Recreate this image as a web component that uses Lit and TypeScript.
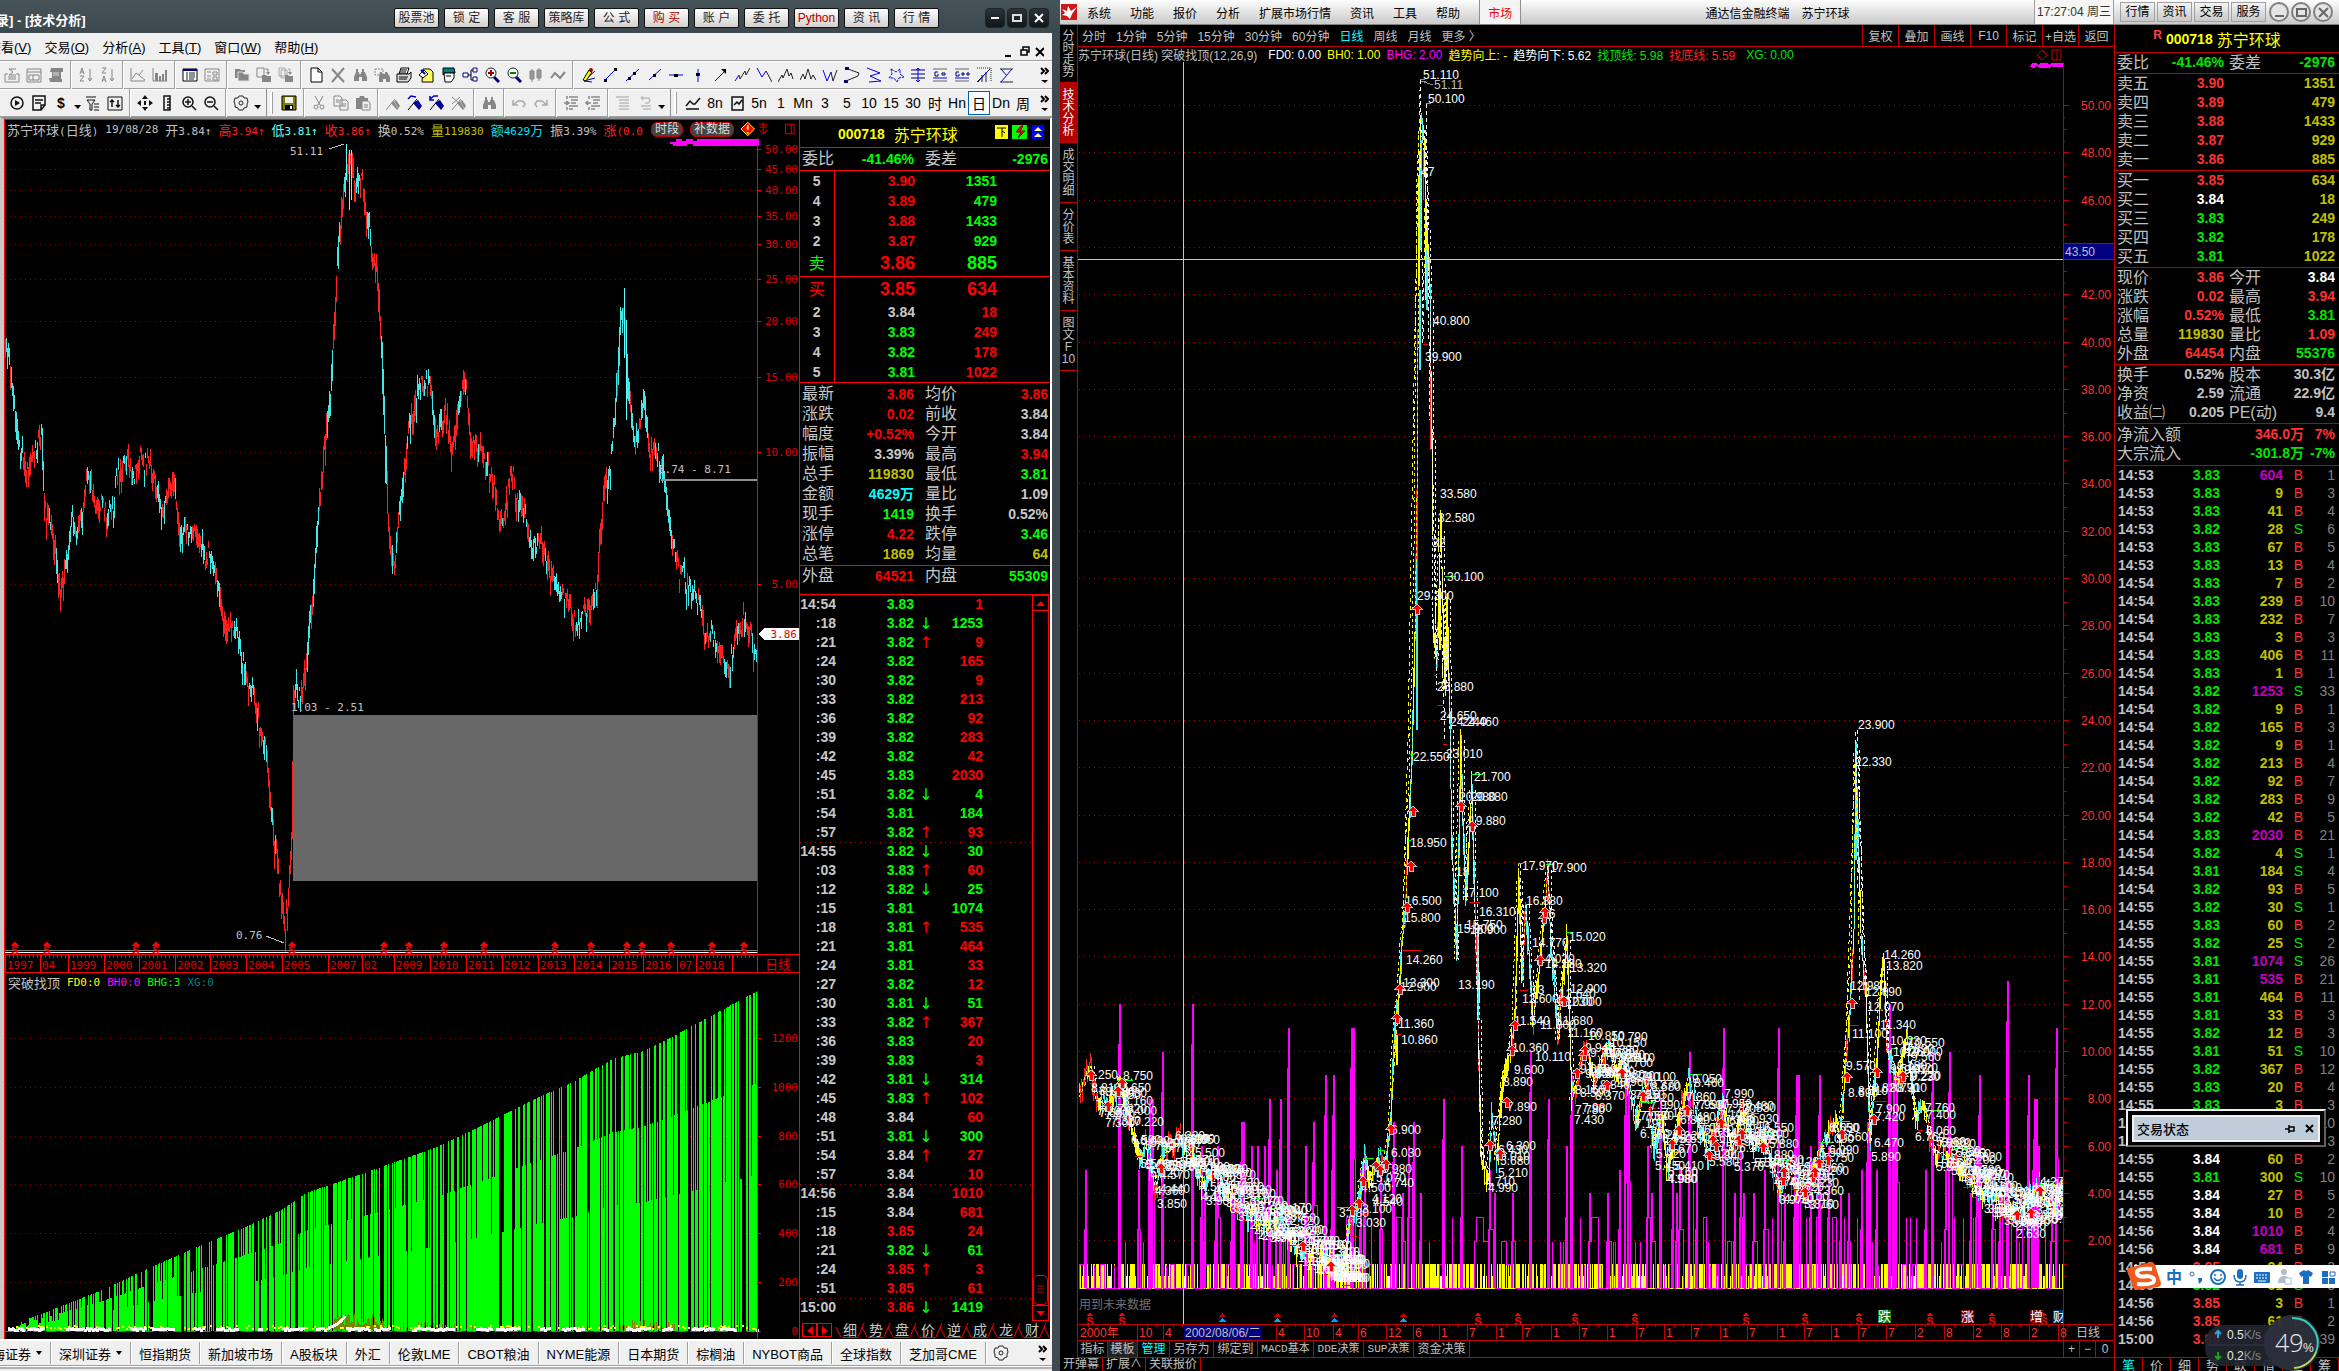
import { LitElement, html, css, svg, nothing } from "lit";
import { customElement } from "lit/decorators.js";
import { classMap } from "lit/directives/class-map.js";

type Pt = [number, number];

/* ---------- helpers ---------- */

const seeded = (seed: number) => () => {
  seed = (seed + 0x6d2b79f5) | 0;
  let t = Math.imul(seed ^ (seed >>> 15), 1 | seed);
  t = (t + Math.imul(t ^ (t >>> 7), 61 | t)) ^ t;
  return ((t ^ (t >>> 14)) >>> 0) / 4294967296;
};

const yAt = (pts: Pt[], x: number) => {
  for (let i = 1; i < pts.length; i++) {
    if (x <= pts[i][0]) {
      const [x0, y0] = pts[i - 1];
      const [x1, y1] = pts[i];
      return y0 + ((y1 - y0) * (x - x0)) / (x1 - x0 || 1);
    }
  }
  return pts[pts.length - 1][1];
};

const pairs = (s: string): Pt[] =>
  s.trim().split(/\s+/).map((p) => p.split(",").map(Number) as Pt);

/* Han runs and Latin runs get their own size */
const mix = (text: string) =>
  text
    .split(/([\u2e80-\uffef]+)/)
    .filter((t) => t)
    .map((t) => (/[\u2e80-\uffef]/.test(t) ? html`<span class="han">${t}</span>` : t));

const tone = (price: string) => {
  const v = parseFloat(price);
  return v > 3.84 ? "r" : v < 3.84 ? "g" : "w";
};

/* ---------- shared styles ---------- */

const base = css`
  * { box-sizing: border-box; }
  button { font: inherit; color: inherit; background: none; border: 0; padding: 0; margin: 0; white-space: nowrap; }
  table { border-collapse: collapse; border-spacing: 0; table-layout: fixed; width: 100%; }
  td, th { padding: 0; text-align: left; white-space: nowrap; overflow: hidden; }
  th { font-weight: 400; }
  svg { display: block; }
  .r { color: #ff0000; }
  .g { color: #00ff00; }
  .w { color: #c8c8c8; }
  .y { color: #c0c000; }
  .c { color: #00ffff; }
`;

/* ---------- toolbar icons, 16 x 16 ---------- */

const G = "#868686";
const binoc = (c: string) => svg`<path fill=${c} d="M4 2h2v3h1v2h2V5h1V2h2v3h1l2 5v4h-5v-4H7v4H2v-4l2-5z"/>`;
const glass = (c: string) => svg`<circle cx="7" cy="6" r="5" fill="#fff" stroke="#222"/><path d="M10 10l5 5" stroke="#000080" stroke-width="3"/><path d=${c === "red" ? "M4 6h6M7 3v6" : "M4 6h6"} stroke=${c === "red" ? "#a00000" : "#008000"} stroke-width="2"/>`;
const pin = (c: string, h: string) => svg`<path d="M1 15L10 4" stroke=${h}/><path fill=${c} d="M6 8l5-3 4 6-3 4z"/><path d="M9 6l4 7" stroke=${h === G ? "#bbb" : "#00f"}/>`;
const cut = (d: string) => svg`<path d=${d} fill="none" stroke="#222"/>`;
const seg = (d: string, k: string) => svg`<path d=${d} fill="none" stroke="#0000ff"/><path d=${k} fill="#000"/>`;

const ICONS: Record<string, unknown> = {
  sum: svg`<path d="M1 7h3M12 7h3M1 7v8h14V7M4 10h8M4 12h8M5 2h7M5 2l4 3-4 3h7" fill="none" stroke=${G}/>`,
  form: svg`<path d="M1 2h14v13H1zM1 5h14M3 8h10v5H3zM7 8v5" fill="none" stroke=${G}/>`,
  scroll: svg`<path fill=${G} d="M3 1h12v4h-2v7h1v3H2l-1-4h3V5H2z"/><path d="M5 6h6M5 8h6" stroke="#ddd"/>`,
  az: svg`<path d="M2 7l2-6 2 6M2 5h4M2 9h4l-4 5h4M12 2v12M10 11l2 3 2-3" fill="none" stroke=${G}/>`,
  za: svg`<path d="M2 1h4L2 6h4M2 15l2-6 2 6M2 13h4M12 2v12M10 11l2 3 2-3" fill="none" stroke=${G}/>`,
  line: svg`<path d="M1 1v13h14M2 12l4-6 4 3 5 4M9 8l4-5" fill="none" stroke=${G}/>`,
  bars: svg`<path d="M1 1v13h14" fill="none" stroke=${G}/><path fill=${G} d="M3 6h3v8H3zM7 9h2v5H7zM10 7h2v7h-2zM13 3h2v11h-2z"/>`,
  list: svg`<path fill="#fff" stroke="#000" d="M1 2h14v12H1z"/><path fill="#000090" d="M1 2h14v2H1z"/><path d="M4 6h2M7 6h6M4 8h2M7 8h6M4 10h2M7 10h6M4 12h2M7 12h5" stroke="#222"/>`,
  panes: svg`<path d="M1 2h14v12H1zM3 5h4M9 5h4v3H9zM3 9h4M3 12h4M9 10h4v3H9z" fill="none" stroke=${G}/>`,
  folders: svg`<path fill=${G} d="M1 2h5l1 1h4v2H4v6H1z"/><path fill=${G} stroke="#ddd" d="M4 5h5l1 2h5v7H4z"/>`,
  fup: svg`<path d="M1 1h7v9H1zM9 2h3v4" fill="none" stroke=${G}/><path fill=${G} d="M6 8h4l1 1h4v6H6zM10 5h4l-2 3z"/>`,
  fdn: svg`<path d="M1 1h6v8H1zM3 3h6v8H3zM10 2h2v4" fill="none" stroke="#aaa"/><path fill=${G} d="M7 8h3l1 1h4v6H7zM10 5h4l-2 3z"/>`,
  page: svg`<path d="M3 1h7l4 4v10H3zM10 1v4h4" fill="#fff" stroke="#000"/>`,
  cross: svg`<path d="M2 2l12 13M14 1L2 15" stroke=${G} stroke-width="2"/>`,
  binoc: binoc(G),
  binoc2: svg`<path d="M1 2h8v6H1z" fill="none" stroke=${G} stroke-dasharray="2 1"/><path fill=${G} d="M6 5h2v2h3V5h2l3 5v5h-4v-3H9v3H5v-5z"/>`,
  print: svg`<path fill="#fff" stroke="#000" d="M5 1h8l-2 6H3z"/><path fill="#ddd" stroke="#000" d="M1 7h12l2-2v6l-3 4H1z"/><path d="M5 3h6M4 5h6M3 10h9M3 12h8" stroke="#000"/>`,
  note: svg`<path fill="#ffff66" stroke="#000" d="M5 2h7l3 3v10H4z"/><path d="M1 8l5-5 4 4-5 4z" fill="#fff" stroke="#000"/><path d="M3 3l4 4" stroke="#0000c0" stroke-width="2"/>`,
  book: svg`<path fill="#008080" stroke="#000" d="M3 1h11l1 5H5L3 8z"/><path fill="#fff" stroke="#000" d="M4 6h10v5l-3 4H5z"/><path d="M6 9h5" stroke="#000"/>`,
  tree: svg`<path d="M6 8h3M9 3v10M9 3h2M9 13h2" stroke="#000"/><path fill="#fff" stroke="#000090" d="M1 6h5v4H1zM11 1h4v4h-4zM11 10h4v4h-4z"/>`,
  zin: glass("red"),
  zout: glass("green"),
  candle: svg`<path d="M4 2v13M11 1v13" stroke=${G}/><path fill="#999" stroke=${G} d="M2 4h4v8H2zM9 3h4v8H9z"/>`,
  wave: svg`<path d="M1 11l4-5 3 3 2 2 5-6" fill="none" stroke=${G} stroke-width="2"/>`,
  pencil: svg`<path d="M4 14L15 4M4 14l11-3M4 14l8 1" stroke="#0000c0"/><path d="M3 13L9 3l3 2-6 9z" fill="#ffff00" stroke="#000"/><circle cx="11" cy="3" r="2" fill="#a00000"/>`,
  s1: seg("M3 13L13 3", "M2 12h3v3H2zM12 1h3v3h-3z"),
  s2: seg("M2 14L15 2", "M4 10h3v3H4zM9 5h3v3H9z"),
  s3: seg("M3 13L15 2", "M7 7h3v3H7z"),
  s4: seg("M1 8h14", "M6 7h4v3H6z"),
  s5: seg("M8 2v13", "M6 6h4v3H6z"),
  s6: seg("M3 14L13 4", "M9 2h5v5l-2-2z"),
  z1: svg`<path d="M1 14l4-6" stroke="#00f" fill="none"/><path d="M5 8l1 4 5-8 1 4 4-7" fill="none" stroke="#222"/>`,
  z2: svg`<path d="M1 1l5 9 4-6" stroke="#00f" fill="none"/><path d="M10 4l6 11" fill="none" stroke="#222"/>`,
  z3: cut("M0 15l4-7 1 3 4-9 2 7 2-3 2 6"),
  z4: cut("M0 13l3-6 2 5 3-10 3 10 2-4 3 5"),
  z5: svg`<path d="M1 3l4 11 4-9" stroke="#00f" fill="none"/><path d="M9 5l2 9 4-11" fill="none" stroke="#222"/>`,
  z6: svg`<path fill="#000080" d="M1 0h4v3H1zM0 13h4v3H0z"/><path d="M4 2l11 4-1 3-12 5" fill="none" stroke="#222"/>`,
  z7: svg`<path d="M1 1l13 5-10 3 11 5-12 1" fill="none" stroke="#00f"/>`,
  z8: svg`<path d="M3 2l5 3 4-3 0 5 4 3-5 1-2 4-3-4-5 0 3-4z" fill="none" stroke="#00f" stroke-dasharray="3 1"/>`,
  z9: svg`<path d="M1 3h14M1 7h14M1 11h14" stroke="#000080"/><path d="M8 1v14M6 3l2-2 2 2M6 13l2 2 2-2" fill="none" stroke="#00f"/>`,
  g1: svg`<path d="M1 2h14M1 14h14" stroke="#666"/><path d="M1 11h14" stroke="#00f"/><path d="M6 5H3v4h3V7M10 6h3v2h-3z" fill="none" stroke="#000080"/>`,
  g2: svg`<path d="M1 2h14M1 14h14" stroke="#666"/><path d="M1 11h14" stroke="#00f"/><path d="M5 5H2v4h3V7M8 6h2v2H8zM13 6h2v2h-2z" fill="none" stroke="#000080"/>`,
  m1: svg`<path d="M1 1h14v14" fill="none" stroke="#222" stroke-dasharray="1 1"/><path d="M1 15L14 2M6 15V8M10 15V5" stroke="#222"/><path d="M2 15l9-10" stroke="#00f"/>`,
  m2: svg`<path d="M2 2h13M2 15h13" stroke="#222"/><path d="M3 2l6 7M14 2L3 15" stroke="#00f"/>`,
  play: svg`<circle cx="8" cy="8" r="6" fill="none" stroke="#111" stroke-width="1.5"/><path d="M6 5l5 3-5 3z" fill="#111"/>`,
  memo: svg`<path d="M2 1h12v9l-4 5H2zM14 10h-4v5M4 5h8M4 8h6" fill="none" stroke="#111" stroke-width="1.5"/>`,
  filter: svg`<path d="M1 2h10M2 5l3 4v6h2V9l3-4zM9 9h5M9 12h5M9 15h5" fill="none" stroke="#111"/>`,
  updn: svg`<path d="M1 2h14v13H1z" fill="none" stroke="#111"/><path d="M5 12V5M3 7l2-2 2 2M11 5v7M9 10l2 2 2-2" fill="none" stroke="#111" stroke-width="1.5"/>`,
  move: svg`<path fill="#111" d="M8 0l3 4H5zM8 16l3-4H5zM0 8l4-3v6zM16 8l-4-3v6zM7 6h2v4H7z"/>`,
  ruler: svg`<path d="M5 1h6v14H5zM8 4h3M8 7h3M8 10h3M8 13h3" fill="none" stroke="#111" stroke-width="1.5"/>`,
  zi: svg`<circle cx="7" cy="7" r="5" fill="none" stroke="#111" stroke-width="1.5"/><path d="M4 7h6M7 4v6M11 11l4 4" stroke="#111" stroke-width="1.5"/>`,
  zo: svg`<circle cx="7" cy="7" r="5" fill="none" stroke="#111" stroke-width="1.5"/><path d="M4 7h6M11 11l4 4" stroke="#111" stroke-width="1.5"/>`,
  gear: svg`<path d="M6 1h4l1 2 3 0 1 4-1 2 0 3-3 1-1 2H6l-1-2-3-1 0-3-1-2 1-4 3 0z" fill="none" stroke="#222"/><circle cx="8" cy="8" r="2" fill="none" stroke="#222"/>`,
  save: svg`<path fill="#808000" stroke="#000" d="M1 1h14v14H1z"/><path fill="#eee" d="M4 2h8v6H4z"/><path fill="#000" d="M4 10h8v5H4z"/><path fill="#fff" d="M9 11h2v3H9z"/>`,
  cutg: svg`<path d="M4 1l5 9M12 1L7 10" stroke=${G}/><circle cx="5" cy="12" r="2" fill="none" stroke=${G}/><circle cx="11" cy="12" r="2" fill="none" stroke=${G}/>`,
  copy: svg`<path d="M1 1h6l2 2v8H1zM7 5h6l2 2v8H7zM3 5h3M3 7h3M9 9h4M9 11h4" fill="none" stroke=${G}/>`,
  paste: svg`<path fill=${G} d="M1 3h3l1-2h4l1 2h3v11H1z"/><path d="M7 6h6l2 2v7H7z" fill="#eee" stroke=${G}/><path d="M9 10h4M9 12h4" stroke=${G}/>`,
  pin0: pin(G, G),
  pin1: svg`${pin("#000080", "#000")}<path d="M1 4l3-3 5 1" fill="none" stroke="#0000c0" stroke-width="1.5"/>`,
  pin2: svg`${pin("#000080", "#000")}<path d="M1 1v4h4M1 4l4-3h4" fill="none" stroke="#0000c0" stroke-width="1.5"/>`,
  pin3: svg`${pin(G, G)}<path d="M1 2l8 7M9 2L1 9" stroke=${G}/>`,
  undo: svg`<path d="M2 5v5h5M2 10l5-4 5 0 2 3-2 3" fill="none" stroke="#aaa" stroke-width="1.5"/>`,
  redo: svg`<path d="M14 5v5H9M14 10L9 6H4L2 9l2 3" fill="none" stroke="#aaa" stroke-width="1.5"/>`,
  ind: svg`<path d="M6 2h9M8 5h7M8 8h5M6 11h9M6 14h4M4 1v3M4 12v3M1 8h5M3 6l3 2-3 2" fill="none" stroke=${G} stroke-width="1.5"/>`,
  out: svg`<path d="M6 2h9M8 5h7M8 8h5M6 11h9M6 14h4M4 1v3M4 12v3M1 8h5M3 6L1 8l2 2" fill="none" stroke=${G} stroke-width="1.5"/>`,
  rows: svg`<path d="M1 2h13M4 5h10M4 8h10M4 11h10M4 14h10" stroke="#bbb" stroke-width="1.5"/>`,
  rows2: svg`<path d="M4 3h8l1 3-2 2H8M4 11h10M6 14h8M4 3l2-2M4 3l2 2" fill="none" stroke="#bbb" stroke-width="1.5"/>`,
  trend: svg`<path d="M1 11l4-5 3 3 2 0 5-6M1 14h13" fill="none" stroke="#111" stroke-width="1.5"/>`,
  box: svg`<path d="M3 2h11v13H3zM5 10l3-3 2 2 3-4" fill="none" stroke="#111" stroke-width="1.5"/>`,
};

const ic = (name: string, size = 16) =>
  html`<svg viewBox="0 0 16 16" width=${size} height=${size}>${ICONS[name]}</svg>`;

/* ---------- left chart ---------- */

const LEFT_PRICE: Pt[] = pairs(`3,220 5,236 8,252 12,290 18,308 25,315 28,302 30,345 35,352 40,395 43,385 48,355 52,360
  60,325 66,345 72,350 78,330 84,308 90,322 96,318 104,324 110,340 116,328 122,355 130,368 138,375 145,388 152,420
  158,425 165,458 172,480 178,500 184,560 188,590 191,616 194,600 196,570 197,468 202,470 206,440 210,400 214,350
  218,310 222,260 226,190 230,135 234,108 238,125 243,124 248,165 253,185 256,225 260,350 264,385 268,350 274,300
  280,248 288,254 292,285 298,274 303,310 306,290 311,260 316,290 322,300 330,325 335,350 342,320 350,345 356,370
  363,362 370,390 378,400 386,415 394,415 400,400 404,340 409,310 412,290 416,215 418,205 421,270 426,300 432,270
  435,310 440,304 444,316 448,350 454,378 460,393 466,400 472,426 478,430 484,446 488,458 492,440 498,414 504,434
  508,426`).map(([x, y]) => [Math.round(x * 1.4917), Math.round(y * 1.4917)] as Pt);

const candles = (pts: Pt[], x0: number, x1: number, seed: number, colors: string[], amp: number, maxSlope: number, wander: number) => {
  const rnd = seeded(seed);
  const d = colors.map(() => "");
  let k = 0;
  let off = 0;
  for (let x = x0; x < x1; x++) {
    off = off * 0.8 + (rnd() - 0.5) * wander;
    const y = yAt(pts, x) + off;
    const next = yAt(pts, x + 1) + off;
    const slope = Math.min(Math.abs(next - y), maxSlope);
    const top = Math.round(Math.min(y, next) - rnd() * amp);
    const h = Math.round(slope + 3 + rnd() * amp);
    if (rnd() < 0.45) k = Math.floor(rnd() * colors.length);
    d[k] += `M${x} ${top}v${h}`;
  }
  return d.map((p, i) => svg`<path d=${p} stroke=${colors[i]} transform="translate(.5 0)"/>`);
};

const GRID_L: [string, number][] = [
  ["50.00", 149], ["45.00", 169], ["40.00", 190], ["35.00", 216], ["30.00", 244],
  ["25.00", 279], ["20.00", 321], ["15.00", 377], ["10.00", 452], ["5.00", 584],
];
const YEARS: [string, number][] = [
  ["1997", 6], ["04", 41], ["1999", 69], ["2000", 105], ["2001", 140], ["2002", 176], ["2003", 211], ["2004", 247],
  ["2005", 283], ["2007", 329], ["02", 363], ["2009", 395], ["2010", 431], ["2011", 467], ["2012", 503], ["2013", 539],
  ["2014", 575], ["2015", 610], ["2016", 644], ["07", 678], ["2018", 697], ["", 733],
];
const WEDGE: Pt[] = pairs(`6,1330 25,1319 51,1309 102,1289 153,1265 204,1243 245,1226 281,1209 306,1192 332,1183
  378,1167 434,1147 485,1123 536,1097 571,1082 612,1058 643,1050 668,1038 714,1013 757,990`);

const wedgeBars = () => {
  const rnd = seeded(11);
  let d = "";
  let density = 0.5;
  for (let x = 16; x < 757; x++) {
    if (x % 9 === 0) density = 0.3 + rnd() * 0.55;
    const full = 1330 - yAt(WEDGE, x);
    const r = rnd();
    let f = 0;
    if (r < 0.45) f = 1;
    else if (r < 0.45 + density * 0.4) f = 0.73;
    else if (r < 0.5 + density * 0.5) f = 0.46;
    else if (r < 0.62) f = 0.2;
    if (x > 379 && x < 384) f = 0;
    if (f) d += `M${x} 1330v-${Math.round(full * f)}`;
  }
  return d;
};

const dotsRow = () => {
  const rnd = seeded(5);
  let white = "";
  let olive = "";
  let yellow = "";
  for (let x = 8; x < 757; x += 2) {
    if (Math.sin(x / 11) + Math.sin(x / 5) > -0.1) white += `M${x} ${1327 + Math.round(rnd() * 2)}h3`;
    if (rnd() > 0.6) yellow += `M${x} ${1328 - Math.round(rnd() * 3)}h2`;
  }
  for (let x = 334; x < 384; x++) olive += `M${x} 1329v-${Math.round(4 + rnd() * 14)}`;
  for (let x = 400; x < 480; x += 3) olive += `M${x} 1329v-${Math.round(rnd() * 8)}`;
  for (let x = 620; x < 675; x += 2) olive += `M${x} 1329v-${Math.round(rnd() * 10)}`;
  return { white, olive, yellow };
};

const bonus = (x: number) => svg`
  <path d="M${x - 4} 946l4-5 4 5z" fill="#ff0000"/>
  <text x=${x} y="954" class="sm" text-anchor="middle">S</text>`;

@customElement("left-chart")
class LeftChart extends LitElement {
  static styles = [base, css`
    :host { display: flex; flex-direction: column; flex: 1; min-width: 0; background: #000; }
    .line { display: flex; align-items: center; height: 18px; flex: none; padding-left: 2px; color: #c0c0c0; font: 11px "DejaVu Sans Mono", "Noto Sans CJK SC", monospace; white-space: nowrap; overflow: hidden; }
    .han { font-size: 13px; }
    .line > span { margin-right: 7px; }
    .right { display: flex; align-items: center; gap: 7px; margin-left: auto; height: 18px; width: 148px; flex: none; }
    .pill { height: 15px; padding: 0 3px; border: 1px solid #c00000; border-radius: 6px; background: #444; color: #ddd; font-size: 12px; line-height: 13px; }
    .big { flex: 835 1 0; min-height: 0; }
    .sub { flex: 348 1 0; min-height: 0; }
    .ind { padding-left: 3px; }
    svg { width: 100%; }
    text { font: 11px "DejaVu Sans Mono", "Noto Sans CJK SC", monospace; }
    .ax { fill: #e00000; }
    .cn { font-size: 13px; }
    .gy { fill: #c0c0c0; }
    .sm { font: bold 11px "Liberation Sans", sans-serif; fill: #ff0000; }
    .m { color: #ff00ff; } .cy { color: #00e0ff; } .ol { color: #c0c000; } .ye { color: #ffff00; } .te { color: #008080; } .r { color: #ff2020; }
    .lc { color: #60ffff; }
  `];

  render() {
    const d = dotsRow();
    return html`
      <div class="line">
        <span>${mix("苏宁环球(日线)")}</span><span>19/08/28</span><span>${mix("开3.84↑")}</span>
        <span class="r">${mix("高3.94↑")}</span><span class="lc">${mix("低3.81↑")}</span>
        <span class="r">${mix("收3.86↑")}</span><span>${mix("换0.52%")}</span>
        <span class="ol">${mix("量119830")}</span><span class="cy">${mix("额4629万")}</span>
        <span>${mix("振3.39%")}</span><span class="r">${mix("涨(0.0")}</span>
        <div class="right">
          <button class="pill">时段</button><button class="pill">补数据</button>
          <svg viewBox="0 0 60 16" style="width:60px" height="16">
            <path d="M7 1l7 7-7 7-7-7z" fill="#ff0000" stroke="#ffff00"/><path d="M7 4v5M7 11v2" stroke="#ffff00" stroke-width="2"/>
            <path d="M19 3h8M19 6h8M23 1v12M19 9l4 4 4-4" stroke="#e00000" fill="none"/>
            <path d="M46 3h9v10h-9zM52 3v10" stroke="#e00000" fill="none"/>
          </svg>
        </div>
      </div>
      <svg class="big" viewBox="5 138 794 835" preserveAspectRatio="none" shape-rendering="crispEdges">
        ${GRID_L.map(([t, y]) => svg`
          <path d="M5 ${y}.5H757" stroke="#900000" stroke-dasharray="1 4"/>
          <path d="M757 ${y}.5h4" stroke="#ff0000"/>
          <text class="ax" x="798" y=${y + 4} text-anchor="end">${t}</text>`)}
        <rect x="293" y="715" width="464" height="166" fill="#686868"/>
        ${candles(LEFT_PRICE, 5, 757, 3, ["#ff2020", "#40e8e8", "#40e8e8", "#ff2020", "#ff2020"], 18, 60, 16)}
        <path d="M346 144v36M351 150v50M349 150v60M624 288v70M626 320v100" stroke="#60ffff"/>
        <path d="M661 479.5h96" stroke="#909090" stroke-width="2"/>
        <path d="M329 149l15-5M266 936l18 7" stroke="#c0c0c0"/>
        <text class="gy" x="290" y="155">51.11</text>
        <text class="gy" x="658" y="473">8.74 - 8.71</text>
        <text class="gy" x="291" y="711">1.03 - 2.51</text>
        <text class="gy" x="236" y="939">0.76</text>
        <path d="M670 141.5h6v-3h6v2h4v-2h7v2h4v-2h62v7H693v-2h-6v2h-14v-2h-3z" fill="#ff00ff"/>
        <path d="M758 634l7-6h34v12h-34z" fill="#fff"/>
        <text x="797" y="638" text-anchor="end" class="ax">3.86</text>
        <path d="M5 950.5H757" stroke="#808080"/><path d="M5 952.5H757" stroke="#fff"/>
        ${[15, 47, 136, 156, 292, 384, 409, 444, 484, 555, 591, 627, 642, 671, 712, 744].map(bonus)}
        <path d="M5 954.5H799M5 972.5H799M757.5 138V973" stroke="#ff0000"/>
        <path d="M5 956.5H757" stroke="#ff0000" stroke-width="3" stroke-dasharray="1 3"/>
        ${YEARS.map(([t, x]) => svg`<path d="M${x - 1}.5 955v18" stroke="#ff0000"/><text class="ax" x=${x + 1} y="969">${t}</text>`)}
        <text class="ax cn" x="765" y="969">日线</text>
      </svg>
      <div class="line ind">
        <span>${mix("突破找顶")}</span><span class="ye">FD0:0</span><span class="m">BH0:0</span>
        <span class="g">BHG:3</span><span class="te">XG:0</span>
      </div>
      <svg class="sub" viewBox="5 990 794 348" preserveAspectRatio="none" shape-rendering="crispEdges">
        ${[1200, 1000, 800, 600, 400, 200, 0].map((v, i) => {
          const y = 1037 + Math.round(i * 48.8);
          return svg`<path d="M5 ${y}.5H757" stroke="#900000" stroke-dasharray="1 4"/><path d="M757 ${y}.5h4" stroke="#ff0000"/>
            <text class="ax" x="798" y=${y + 4} text-anchor="end">${v}</text>`;
        })}
        <path d=${wedgeBars()} stroke="#00ff00" transform="translate(.5 0)"/>
        <path d=${d.olive} stroke="#808000"/>
        <path d=${d.yellow} stroke="#ffff00" stroke-width="2"/>
        <path d="M5 1330.5H757" stroke="#ff00ff" stroke-dasharray="9 5"/>
        <path d=${d.white} stroke="#fff" stroke-width="3"/>
        <path d="M328 1327l8-3 5-4 4-5" stroke="#fff" stroke-width="3" fill="none"/>
        <path d="M757.5 990V1338" stroke="#ff0000"/>
      </svg>`;
  }
}

/* ---------- left quote panel ---------- */

const TICKS_L = `14:54 3.83 - 1 r|:18 3.82 ↓ 1253 g|:21 3.82 ↑ 9 r|:24 3.82 - 165 r|:30 3.82 - 9 r|:33 3.82 - 213 r|:36 3.82 - 92 r|:39 3.82 - 283 r|:42 3.82 - 42 r|:45 3.83 - 2030 r|:51 3.82 ↓ 4 g|:54 3.81 - 184 g|:57 3.82 ↑ 93 r|14:55 3.82 ↓ 30 g|:03 3.83 ↑ 60 r|:12 3.82 ↓ 25 g|:15 3.81 - 1074 g|:18 3.81 ↑ 535 r|:21 3.81 - 464 r|:24 3.81 - 33 r|:27 3.82 - 12 r|:30 3.81 ↓ 51 g|:33 3.82 ↑ 367 r|:36 3.83 - 20 r|:39 3.83 - 3 r|:42 3.81 ↓ 314 g|:45 3.83 ↑ 102 r|:48 3.84 - 60 r|:51 3.81 ↓ 300 g|:54 3.84 ↑ 27 r|:57 3.84 - 10 r|14:56 3.84 - 1010 r|:15 3.84 - 681 r|:18 3.85 - 24 r|:21 3.82 ↓ 61 g|:24 3.85 ↑ 3 r|:51 3.85 - 61 r|15:00 3.86 ↓ 1419 g`
  .split("|").map((r) => r.split(" "));

@customElement("left-quote")
class LeftQuote extends LitElement {
  static styles = [base, css`
    :host { display: flex; flex-direction: column; width: 251px; flex: none; background: #000; border-left: 1px solid #ff0000; color: #c8c8c8; font: bold 14px "Liberation Sans", "Noto Sans CJK SC", sans-serif; }
    h2 { display: flex; align-items: center; height: 28px; margin: 0; padding-left: 38px; gap: 9px; border-bottom: 1px solid #ff0000; color: #ffff00; font-size: 14px; }
    h2 .nm { font-size: 16px; font-weight: 400; }
    h2 svg { margin-left: auto; margin-right: 6px; margin-bottom: 4px; }
    section { border-bottom: 1px solid #ff0000; padding-right: 2px; }
    th { font-size: 16px; padding-left: 2px; color: #c8c8c8; }
    th.s { padding-left: 11px; }
    td { text-align: right; }
    tr { height: 20px; line-height: 20px; }
    .ratio tr { height: 22px; line-height: 22px; }
    .book th { text-align: center; font-size: 14px; font-weight: 700; border-right: 1px solid #ff0000; padding: 0; }
    .book tr.big { height: 25px; font-size: 18px; line-height: 25px; }
    .book tr.big th { font-size: 16px; font-weight: 400; }
    .book th.g { color: #00ff00; }
    .book th.r { color: #ff0000; }
    .info { padding-top: 1px; padding-bottom: 1px; }
    .io { padding-bottom: 8px; }
    .feed { display: flex; flex: 1; min-height: 0; }
    .ticks { flex: 1; }
    .ticks tr { height: 19px; line-height: 19px; }
    .ticks tr.sep { background: repeating-linear-gradient(90deg, #c00000 0 1px, transparent 1px 5px) top / 100% 1px no-repeat; }
    .ticks td.ar { text-align: center; font: 16px "DejaVu Sans", sans-serif; line-height: 18px; }
    .bar { display: flex; flex-direction: column; width: 17px; border: 1px solid #ff0000; margin-right: 1px; }
    .bar button { height: 15px; display: grid; place-items: center; }
    .bar .up { border-bottom: 1px solid #ff0000; }
    .bar .dn { border-top: 1px solid #ff0000; }
    .thumb { margin-top: auto; height: 30px; border: 1px solid #ff0000; border-radius: 5px; display: grid; place-items: center; }
    .tabs { display: flex; align-items: center; height: 18px; padding-left: 2px; font: 14px "Noto Sans CJK SC", sans-serif; }
    .tabs .nav { width: 15px; height: 14px; border: 1px solid #ff0000; display: grid; place-items: center; }
    .tabs .t { border-bottom: 1px solid #ff0000; line-height: 15px; width: 16px; text-align: center; }
    .r { color: #ff0000; }
  `];

  private book(rows: string[][]) {
    return html`<section class="book"><table>
      <colgroup><col style="width:34px"><col style="width:81px"><col style="width:82px"><col></colgroup>
      ${rows.map(([n, p, v, vc, nc]) => html`<tr class=${classMap({ big: !!nc })}>
        <th class=${nc ?? "w"}>${n}</th><td class=${tone(p)}>${p}</td><td class=${vc}>${v}</td><td></td></tr>`)}
    </table></section>`;
  }

  private grid(cls: string, rows: string[][]) {
    return html`<section class=${cls}><table>
      <colgroup><col style="width:36px"><col style="width:78px"><col style="width:50px"><col></colgroup>
      ${rows.map(([a, av, ac, b, bv, bc]) => html`<tr><th>${a}</th><td class=${ac}>${av}</td><th class="s">${b}</th><td class=${bc}>${bv}</td></tr>`)}
    </table></section>`;
  }

  render() {
    return html`
      <h2><span>000718</span><span class="nm">苏宁环球</span>
        <svg width="49" height="14" viewBox="0 0 49 14"><path fill="#ffff00" d="M0 0h13v14H0z"/><path d="M2 3h9M7 3v9M7 6l3 2" stroke="#000" fill="none"/><path fill="#00ff00" d="M17 0h15v14H17z"/><path d="M26 1l-5 6h5l-3 6 7-7h-5l3-5z" fill="#ff0000" stroke="#800000"/><path fill="#0000ff" d="M37 0h12v14H37z"/><path fill="#ffff80" d="M43 2l4 4h-8zM43 8l4 4h-8z"/></svg>
      </h2>
      ${this.grid("ratio", [["委比", "-41.46%", "g", "委差", "-2976", "g"]])}
      ${this.book([["5", "3.90", "1351", "g"], ["4", "3.89", "479", "g"], ["3", "3.88", "1433", "g"], ["2", "3.87", "929", "g"], ["卖", "3.86", "885", "g", "g"]])}
      ${this.book([["买", "3.85", "634", "r", "r"], ["2", "3.84", "18", "r"], ["3", "3.83", "249", "r"], ["4", "3.82", "178", "r"], ["5", "3.81", "1022", "r"]])}
      ${this.grid("info", [
        ["最新", "3.86", "r", "均价", "3.86", "r"], ["涨跌", "0.02", "r", "前收", "3.84", "w"],
        ["幅度", "+0.52%", "r", "今开", "3.84", "w"], ["振幅", "3.39%", "w", "最高", "3.94", "r"],
        ["总手", "119830", "y", "最低", "3.81", "g"], ["金额", "4629万", "c", "量比", "1.09", "w"],
        ["现手", "1419", "g", "换手", "0.52%", "w"], ["涨停", "4.22", "r", "跌停", "3.46", "g"],
        ["总笔", "1869", "y", "均量", "64", "y"],
      ])}
      ${this.grid("io", [["外盘", "64521", "r", "内盘", "55309", "g"]])}
      <div class="feed">
        <div class="ticks"><table>
          <colgroup><col style="width:36px"><col style="width:78px"><col style="width:24px"><col style="width:45px"><col></colgroup>
          ${TICKS_L.map(([t, p, a, v, c], i) => html`<tr class=${classMap({ sep: i > 0 && t.length > 3 })}>
            <td class="w">${t}</td><td class=${tone(p)}>${p}</td>
            <td class="ar ${c}">${a === "-" ? nothing : a}</td><td class=${c}>${v}</td><td></td></tr>`)}
        </table></div>
        <div class="bar">
          <button class="up" aria-label="上"><svg width="9" height="5"><path d="M0 5l5-5 4 5z" fill="#ff0000"/></svg></button>
          <div class="thumb"><svg width="7" height="10"><path d="M0 1h7M0 4h7M0 7h7" stroke="#c00000"/></svg></div>
          <button class="dn" aria-label="下"><svg width="9" height="5"><path d="M0 0h9L5 5z" fill="#ff0000"/></svg></button>
        </div>
      </div>
      <div class="tabs">
        <button class="nav" aria-label="左"><svg width="6" height="9"><path d="M6 0v9L0 5z" fill="#ff0000"/></svg></button>
        <button class="nav" aria-label="右"><svg width="6" height="9"><path d="M0 0v9l6-4z" fill="#ff0000"/></svg></button>
        ${["", ..."细势盘价逆成龙财"].map((t) => html`${t ? html`<button class="t">${t}</button>` : nothing}<svg width="10" height="16" viewBox="0 0 10 16"><path d=${t ? "M0 15L6 1M4 5L9 15" : "M4 5L9 15"} stroke="#ff0000" fill="none"/></svg>`)}
      </div>`;
  }
}

/* ---------- left window ---------- */

const BAR1 = "sum form scroll | az za | line bars | list panes | folders fup fdn | page cross binoc binoc2 print note book tree zin zout candle wave | pencil s1 s2 s3 s4 s5 s6 z1 z2 z3 z4 z5 z6 z7 z8 z9 g1 g2 m1 m2".split(" ");
const BAR2 = "play memo #$ v filter updn | move ruler zi zo | gear v ! save | cutg copy paste | pin0 pin1 pin2 pin3 | binoc | undo redo | ind out | rows rows2 v ! trend #8n box #5n #1 #Mn #3 #5 #10 #15 #30 #时 #Hn #日 #Dn #周".split(" ");

const more = html`<button class="more" aria-label="更多"><svg width="9" height="22" viewBox="0 0 9 22"><path d="M1 4l3 3-3 3M5 4l3 3-3 3" fill="none" stroke="#000" stroke-width="2"/><path d="M1 16h7l-3 3z"/></svg></button>`;

@customElement("left-window")
class LeftWindow extends LitElement {
  static styles = [base, css`
    :host { display: flex; flex-direction: column; min-width: 0; overflow: hidden; background: #3f4b50; font: 13px "Liberation Sans", "Noto Sans CJK SC", sans-serif; color: #000; }
    .title { display: flex; align-items: center; height: 33px; padding-right: 11px; background: linear-gradient(#46545a, #3c484d); color: #fff; font-weight: 700; }
    .title h1 { font-size: 13px; margin: 5px auto 0 -4px; white-space: nowrap; }
    .tb { width: 45px; height: 20px; margin: 3px 5px 0 0; border: 1px solid #111; border-radius: 2px; background: linear-gradient(#fff, #d4d0ce); color: #222; font-size: 12px; font-weight: 400; line-height: 16px; }
    .tb.red { color: #b00000; }
    .wb { display: flex; gap: 2px; margin: 3px 0 0 41px; }
    .wb button { width: 20px; height: 20px; border-radius: 4px; background: linear-gradient(#2a3338, #10171a); display: grid; place-items: center; border: 1px solid #1d2427; }
    .body { flex: 1; display: flex; flex-direction: column; min-height: 0; margin-right: 8px; background: #f0f0f0; }
    nav { display: flex; align-items: center; height: 28px; border-bottom: 1px solid #a0a0a0; gap: 13px; }
    nav button:first-child { margin-left: -12px; }
    nav .mdi { margin: 10px 8px 0 auto; }
    .bar { display: flex; align-items: center; height: 28px; border-bottom: 1px solid #a0a0a0; box-shadow: inset 0 1px #fff; padding-left: 1px; }
    .bar.two { padding-left: 6px; }
    .bar button { width: 22px; height: 24px; flex: none; display: grid; place-items: center; font-size: 14px; }
    .bar .v { width: 10px; align-content: end; padding-bottom: 6px; }
    .bar .on { border: 1px solid #0060b0; background: #f8fbff; }
    .bar .more, .tabs .more { width: 12px; margin: 0 2px 0 auto; }
    .sep { width: 8px; height: 28px; flex: none; background: linear-gradient(#a0a0a0, #a0a0a0) 3px 0 / 1px 100% no-repeat, linear-gradient(#fff, #fff) 4px 0 / 1px 100% no-repeat; }
    .grip { width: 16px; height: 28px; flex: none; background: linear-gradient(#909090, #909090) 4px 0 / 1px 100% no-repeat, linear-gradient(#a0a0a0, #a0a0a0) 10px 3px / 1px 22px no-repeat, linear-gradient(#fff, #fff) 8px 3px / 2px 22px no-repeat; }
    .work { flex: 1; display: flex; min-height: 0; border-top: 2px solid #909090; border-left: 4px solid #c8c8c8; border-right: 2px solid #fff; }
    .frame { flex: 1; display: flex; min-width: 0; border: solid #ff0000; border-width: 1px 0 0 1px; }
    .tabs { display: flex; align-items: center; height: 27px; border-top: 2px solid #fff; border-bottom: 1px solid #a0a0a0; font-size: 13px; overflow: hidden; }
    .tabs .t { height: 22px; padding: 0 8px; border-right: 1px solid #a0a0a0; box-shadow: 1px 0 #fff; flex: none; display: flex; align-items: center; gap: 5px; }
    .tabs .t:first-child { margin-left: -29px; }
    .tabs .ico { margin-left: 7px; }
    .status { height: 5px; border-top: 1px solid #fff; box-shadow: inset 0 2px #b0b0b0; }
  `];

  private tool(n: string) {
    if (n === "|") return html`<span class="sep"></span>`;
    if (n === "!") return html`<span class="grip"></span>`;
    if (n === "v") return html`<button class="v" aria-label="展开"><svg width="7" height="4"><path d="M0 0h7L4 4z"/></svg></button>`;
    if (n[0] === "#") return html`<button class=${n === "#日" ? "on" : ""}>${n === "#$" ? html`<b>$</b>` : n.slice(1)}</button>`;
    return html`<button aria-label=${n}>${ic(n)}</button>`;
  }

  render() {
    const tops = ["股票池", "锁 定", "客 服", "策略库", "公 式", "购 买", "账 户", "委 托", "Python", "资 讯", "行 情"];
    const menus = [["查看", "V"], ["交易", "O"], ["分析", "A"], ["工具", "T"], ["窗口", "W"], ["帮助", "H"]];
    const markets = ["恒指期货", "新加坡市场", "A股板块", "外汇", "伦敦LME", "CBOT粮油", "NYME能源", "日本期货", "棕榈油", "NYBOT商品", "全球指数", "芝加哥CME"];
    const caret = html`<svg width="6" height="4"><path d="M0 0h6L3 4z"/></svg>`;
    return html`
      <header class="title"><h1>录] - [技术分析]</h1>
        ${tops.map((t) => html`<button class=${classMap({ tb: true, red: t === "购 买" || t === "Python" })}>${t}</button>`)}
        <div class="wb">
          <button aria-label="最小化"><svg width="10" height="10"><path d="M1 5h8" stroke="#fff" stroke-width="2"/></svg></button>
          <button aria-label="最大化"><svg width="10" height="10"><path d="M1 2h8v6H1z" fill="none" stroke="#ddd" stroke-width="2"/></svg></button>
          <button aria-label="关闭"><svg width="10" height="10"><path d="M1 1l8 8M9 1L1 9" stroke="#fff" stroke-width="2"/></svg></button>
        </div>
      </header>
      <div class="body">
        <nav>${menus.map(([t, k]) => html`<button>${t}(<u>${k}</u>)</button>`)}
          <svg class="mdi" width="40" height="12" viewBox="0 0 40 12"><path d="M1 10h6" stroke="#000" stroke-width="2"/><path d="M17 4h6v5h-6zM19 4V1h6v5h-2" fill="none" stroke="#000" stroke-width="1.5"/><path d="M32 2l8 8M40 2l-8 8" stroke="#000" stroke-width="2"/></svg>
        </nav>
        <div class="bar">${BAR1.map((n) => this.tool(n))}${more}</div>
        <div class="bar two">${BAR2.map((n) => this.tool(n))}${more}</div>
        <div class="work"><div class="frame"><left-chart></left-chart><left-quote></left-quote></div></div>
        <div class="tabs">
          <button class="t">上海证券 ${caret}</button><button class="t">深圳证券 ${caret}</button>
          ${markets.map((t) => html`<button class="t">${t}</button>`)}
          <button class="ico" aria-label="设置">${ic("gear")}</button>${more}
        </div>
        <div class="status"></div>
      </div>`;
  }
}

/* ---------- right chart ---------- */

const PRICE_R: Pt[] = pairs(`1079,1097 1085,1085 1091,1066 1096,1100 1108,1105 1115,1098 1122,1083 1131,1127 1140,1160
  1146,1147 1156,1190 1163,1157 1180,1143 1189,1153 1203,1187 1213,1173 1231,1197 1253,1213 1260,1225 1281,1219
  1299,1250 1317,1253 1335,1270 1345,1272 1349,1227 1360,1200 1364,1160 1371,1187 1376,1165 1386,1160 1391,1127
  1393,1073 1396,1020 1400,989 1402,946 1405,921 1408,850 1412,760 1415,640 1417,500 1419,200 1421,130 1424,150
  1427,230 1430,300 1432,440 1433,629 1437,660 1441,530 1445,690 1447,600 1450,730 1452,850 1457,960 1461,740
  1463,821 1466,900 1472,790 1474,880 1478,1020 1481,1155 1489,1178 1492,1120 1497,1160 1503,1085 1511,1050
  1515,1016 1519,880 1522,980 1526,905 1530,970 1533,1025 1540,964 1545,911 1548,870 1551,946 1558,1040 1567,940
  1569,1010 1572,1100 1585,1050 1594,1090 1602,1062 1610,1042 1615,1077 1622,1062 1637,1124 1647,1083 1653,1148
  1662,1117 1667,1168 1678,1127 1690,1078 1700,1133 1708,1155 1722,1105 1732,1150 1743,1112 1753,1150 1763,1140
  1780,1193 1787,1167 1805,1195 1820,1153 1833,1125 1840,1143 1845,1080 1850,1010 1854,930 1856,750 1858,840
  1861,940 1866,1000 1870,1143 1877,1067 1880,1007 1884,965 1887,1050 1897,1080 1907,1042 1915,1120 1923,1108
  1933,1150 1950,1157 1967,1178 1977,1187 1993,1200 2017,1213 2040,1187 2050,1207 2062,1197`);

const LABELS: [string, number, number][] = `51.110,1423,75 50.100,1428,99 47,1421,172 40.800,1433,321 39.900,1425,357
33.580,1440,494 32.580,1438,518 32,1432,543 30.100,1447,577 29.300,1417,596 26.880,1437,687 24.650,1440,716
24.240,1450,722 24.460,1462,722 22.550,1413,757 23.010,1446,754 21.700,1474,777 20.980,1459,797 20.880,1471,797
19.880,1469,821 18.950,1410,843 18,1456,872 17.100,1462,893 16.500,1405,901 15.800,1404,918 16.310,1479,912
15.750,1466,925 15.900,1457,929 16.900,1470,930 14.260,1406,960 13.300,1403,983 12.900,1400,987 13.190,1458,985
11.360,1398,1024 10.860,1401,1040 17.970,1522,866 17.900,1550,868 16.880,1526,901 16,1542,914 15.020,1569,937
14.770,1532,943 14.020,1538,959 14.180,1545,964 12.640,1559,994 12.600,1522,999 13,1531,990 12.000,1565,1002
12.030,1556,1002 11.680,1557,1021 11.540,1514,1021 11.800,1540,1025 11.160,1567,1033 10.850,1588,1036
10.790,1611,1037 10.360,1512,1048 10.380,1602,1050 10.110,1535,1057 23.900,1858,725 22.330,1855,762
14.260,1884,955 13.820,1886,966 12.980,1850,986 12.690,1865,992 12.070,1867,1007 11.340,1880,1025
11.100,1852,1034 9.570,1846,1066 10.550,1908,1043 10.260,1893,1052 10.000,1906,1052 9.250,1088,1075
8.810,1091,1088 8.650,1121,1088 7.200,1097,1111 7.300,1105,1123 7.220,1134,1122 7.000,1127,1111 6.590,1131,1140
3.850,1157,1204 6.410,1178,1140 6.900,1391,1130 6.030,1391,1153 5.980,1382,1169 5.070,1376,1178 4.740,1384,1183
4.500,1361,1188 4.120,1372,1199 4.540,1373,1202 3.100,1362,1209 3.380,1339,1213 3.030,1356,1223 9.600,1514,1070
8.890,1503,1082 7.890,1507,1107 7.280,1492,1121 6.300,1506,1146 6.430,1498,1150 6.010,1500,1156 5.680,1500,1161
5.210,1498,1173 4.710,1485,1182 4.990,1488,1188 9.050,1692,1079 8.680,1651,1087 9.100,1646,1077 9.700,1623,1063
7.980,1582,1108 7.430,1574,1120 5.450,1655,1166 4.980,1667,1179 4.980,1668,1179 7.950,1722,1104 7.730,1726,1109
7.830,1746,1108 7.030,1830,1128 6.560,1838,1137 5.890,1871,1157 6.470,1874,1143 7.420,1875,1117 7.900,1876,1109
8.690,1848,1093 8.510,1858,1091 9.820,1872,1088 9.620,1908,1068 9.230,1910,1077 8.790,1890,1088 7.760,1925,1108
7.400,1926,1115 6.760,1915,1137 6.060,1926,1131 5.820,1972,1157 4.720,1961,1174 4.360,2041,1190 4.160,1983,1187
2.630,2016,1234`
  .split(/\s+/).map((s) => { const [t, x, y] = s.split(","); return [t, +x, +y]; });

const denseLabels = () => {
  const rnd = seeded(21);
  const out: [string, number, number][] = [];
  const zones: [number, number, number][] = [
    [1097, 1122, 6], [1138, 1200, 5], [1200, 1336, 4], [1328, 1340, 2], [1568, 1640, 5], [1642, 1690, 6],
    [1692, 1830, 5], [1888, 1912, 7], [1934, 1970, 5], [1970, 2060, 4],
  ];
  for (const [a, b, step] of zones)
    for (let x = a; x < b; x += step)
      for (const off of [-9, 13]) {
        const y = Math.round(yAt(PRICE_R, x) + off + (rnd() - 0.5) * 10);
        out.push([(50 - (y - off / 2 - 105) / 23.65).toFixed(2) + "0", x + 2, Math.min(y, 1278)]);
      }
  return out;
};

const UPS: Pt[] = pairs(`1091,1075 1108,1106 1118,1091 1122,1083 1161,1168 1303,1246 1331,1266 1352,1210 1359,1203
  1363,1181 1376,1166 1380,1170 1386,1164 1391,1129 1397,1018 1400,989 1407,907 1411,866 1413,811 1417,609 1461,806
  1472,826 1490,1145 1500,1154 1507,1102 1512,1050 1515,1025 1540,960 1544,918 1545,912 1564,1001 1577,1073
  1584,1055 1585,1050 1607,1085 1622,1073 1643,1096 1672,1144 1679,1130 1687,1110 1709,1155 1713,1140 1716,1146
  1721,1123 1739,1140 1742,1134 1763,1147 1783,1180 1784,1172 1805,1192 1813,1177 1815,1172 1819,1163 1828,1160
  1842,1134 1847,1077 1852,1003 1874,1119 1877,1072 1901,1078 1903,1076 2017,1215 2031,1213 2040,1191`);

const TALL: Record<number, number> = {
  1119: 12, 1164: 10, 1191: 12, 1289: 11, 1353: 11, 1270: 8, 1280: 8, 1324: 9, 1335: 9, 1443: 8, 1529: 10, 1243: 7,
  1313: 7, 1492: 8, 1549: 8, 1571: 9, 1415: 7, 1395: 7, 1690: 10, 1722: 11, 1778: 11, 1798: 9, 1821: 9, 1868: 7,
  1895: 9, 1931: 10, 1980: 9, 2009: 13, 2028: 9, 2036: 8, 2056: 11, 1151: 8, 1627: 9, 1660: 8, 1888: 12, 1949: 10,
};

const volume = () => {
  const rnd = seeded(77);
  const tall = new Map(Object.entries(TALL).map(([x, v]) => [+x, v]));
  let d = "M1079 1288";
  let thick = "";
  let x = 1080;
  while (x < 2062) {
    const t = [0, 1, 2, 3].map((i) => tall.get(x + i)).find((v) => v);
    const n = t ?? Math.min(7, Math.floor(Math.pow(rnd(), 2) * 7));
    const top = Math.round(1288 - n * 23.65);
    if (n > 3) {
      const mid = Math.round(1288 - (n / 2) * 23.65);
      d += `V${mid}H${x + 1}V${top}H${x + 2}V${mid}`;
      thick += `M${x + 1} 1288V${n > 6 ? top + 40 : mid}`;
    } else {
      d += `V${top}`;
    }
    x += 2 + Math.floor(rnd() * 4);
    d += `${rnd() < 0.6 ? "V1288" : ""}H${Math.min(x, 2063)}`;
  }
  return { d, thick };
};

const yellowBase = () => {
  const rnd = seeded(9);
  let y = "";
  let w = "";
  for (let x = 1079; x < 2063; x++) {
    if (rnd() < 0.68) y += `M${x}.5 1288V${rnd() < 0.85 ? 1264 : 1276}`;
    else if (rnd() < 0.06) w += `M${x}.5 1288V1276`;
  }
  return { y, w };
};

const XMARKS: [string, number][] = [
  ["2000年", 1079], ["10", 1138], ["4", 1164], ["4", 1277], ["10", 1305], ["4", 1334], ["6", 1359], ["12", 1387],
  ["6", 1414], ["1", 1440], ["7", 1468], ["1", 1497], ["7", 1523], ["1", 1552], ["7", 1580], ["1", 1608], ["7", 1637],
  ["1", 1665], ["7", 1692], ["1", 1721], ["7", 1748], ["1", 1778], ["7", 1805], ["1", 1832], ["7", 1859], ["7", 1887],
  ["2", 1916], ["8", 1945], ["2", 1974], ["8", 2002], ["2", 2030], ["8", 2059],
];

@customElement("right-chart")
class RightChart extends LitElement {
  static styles = [base, css`
    :host { display: flex; flex-direction: column; flex: 1; min-width: 0; min-height: 0; }
    .head { display: flex; align-items: center; gap: 6px; height: 15px; font: 12px "Liberation Sans", "Noto Sans CJK SC", sans-serif; color: #c0c0c0; white-space: nowrap; }
    .head .a { margin-right: 5px; }
    .head .z { margin-left: 5px; }
    .head svg { margin: 0 52px 0 auto; }
    .plot { flex: 1 1 0; min-height: 0; width: 100%; }
    text { font: 12px "Liberation Sans", "Noto Sans CJK SC", sans-serif; fill: #fff; }
    .ax { fill: #ff3030; }
    .gr { fill: #c0c0c0; }
    .dim { fill: #707070; }
    .flag { font-size: 13px; fill: #fff; }
    .sm { font: bold 11px "Liberation Sans", sans-serif; fill: #ff0000; }
    .wh { color: #fff; } .ye { color: #ffff00; } .mg { color: #ff00ff; } .gn { color: #00e600; } .rd { color: #ff2020; }
  `];

  render() {
    const yb = yellowBase();
    const vol = volume();
    const labels = [...denseLabels(), ...LABELS];
    const rnd = seeded(4);
    let up = "";
    let down = "";
    for (let i = 1; i < PRICE_R.length; i++) {
      const [x0, y0] = PRICE_R[i - 1];
      const [x1, y1] = PRICE_R[i];
      const s = `M${x0} ${y0}L${x1} ${y1}`;
      if (y1 < y0) up += s + `M${x0 - 3} ${y0}L${x1 - 2} ${y1}`;
      else down += s + `M${x0 + 3} ${y0}L${x1 + 2} ${y1}`;
    }
    let hi = "";
    let lo = "";
    for (let x = 1090; x < 2050; x += 9) {
      if (x > 1396 && x < 1580) continue;
      if (x > 1843 && x < 1890) continue;
      if (rnd() < 0.5) hi += `M${x} ${Math.round(yAt(PRICE_R, x)) - 14}.5h${Math.round(4 + rnd() * 12)}`;
      else lo += `M${x} ${Math.round(yAt(PRICE_R, x)) + 14}.5h${Math.round(4 + rnd() * 8)}`;
    }
    return html`
      <div class="head">
        <span class="a">苏宁环球(日线) 突破找顶(12,26,9)</span><span class="wh">FD0: 0.00</span><span class="ye">BH0: 1.00</span>
        <span class="mg">BHG: 2.00</span><span class="ye">趋势向上: -</span><span class="wh">趋势向下: 5.62</span>
        <span class="gn">找顶线: 5.98</span><span class="rd">找底线: 5.59</span><span class="gn z">XG: 0.00</span>
        <svg width="26" height="14" viewBox="0 0 26 14"><path d="M6 2l5 5-5 5-5-5zM16 2h9v10h-9zM21 2v10" fill="none" stroke="#c00000"/></svg>
      </div>
      <svg class="plot" viewBox="1078 62 1036 1279" preserveAspectRatio="none" shape-rendering="crispEdges">
        <clipPath id="area"><rect x="1078" y="62" width="985" height="1262"/></clipPath>
        ${Array.from({ length: 25 }, (_, i) => {
          const v = 50 - i * 2;
          const y = Math.round(105 + i * 47.3);
          return svg`<path d="M1079 ${y}.5H2063" stroke="#b00000" stroke-dasharray="1 4"/>
            <path d="M2063 ${y}.5h6M2063 ${y + 12}.5h2M2063 ${y + 24}.5h4M2063 ${y + 36}.5h2" stroke="#c00000"/>
            ${v === 44 ? nothing : svg`<text class="ax" x="2111" y=${y + 5} text-anchor="end">${v.toFixed(2)}</text>`}`;
        })}
        <g clip-path="url(#area)">
          <path d=${yb.y} stroke="#ffff00"/><path d=${yb.w} stroke="#fff" stroke-width="2"/>
          <path d="M1079 1288.5H2063" stroke="#ffff00"/>
          <path d=${vol.d} fill="none" stroke="#ff00ff" transform="translate(.5 .5)"/>
          <path d=${vol.thick} stroke="#ff00ff" stroke-width="2"/>
          ${candles(PRICE_R, 1079, 2062, 8, ["#40f0f0", "#ffff00", "#ff2020", "#ffff00", "#40f0f0"], 16, 90, 6)}
          <path d="M1418.5 176v110M1425.5 200v100M1426.5 230v60M1396.5 1035v30M1446.5 640v30M1439.5 590v60M1478.5 972v30" stroke="#ffff00" stroke-width="2"/>
          <path d="M1419.5 290v80M1420.5 140v110M1426.5 250v60M1477.5 930v90M1855.5 770v90M1416.5 560v170" stroke="#40f0f0" stroke-width="2"/>
          <path d="M1417.5 330v280M1423.5 150v50M1430.5 350v100" stroke="#ff3030"/>
          <path d="M1390 1130L1402 950 1408 740 1411 560 1414 380 1418 180 1420 90M1425 130V240M1423 340L1426 140M1860 1000L1855 730M1843 1120L1856 735M1516 1010L1519 864M1876 1070L1883 960" fill="none" stroke="#ffff00" stroke-dasharray="4 4"/>
          <path d="M1420 80L1423 345M1426 104L1430 420M1430 324L1437 690M1438 518L1445 740M1857 730L1871 1140M1478 1025L1482 1160M1547 866L1560 1040M1520 864L1524 990M1884 960L1889 1060" fill="none" stroke="#fff" stroke-dasharray="4 3"/>
          <path d=${up} fill="none" stroke="#ffff00" stroke-dasharray="3 3"/>
          <path d=${down} fill="none" stroke="#fff" stroke-dasharray="3 3"/>
          <path d="${hi}M1420 79.5h5M1426 103.5h5M1433 323.5h5M1364 1158.5h10M1337 1207.5h14M1690 1074.5h12M1907 1038.5h9M1925 1110.5h22M1952 1146.5h17M2040 1184.5h15M1410 754.5h4M1414 595.5h3M1445 576.5h11M1471 774.5h12M1518 863.5h5M1546 864.5h5M1566 932.5h6M1408 840.5h3" stroke="#00ff00"/>
          <path d="${lo}M1423 344.5h5M1403 950.5h18M1155 1197.5h12M1850 1025.5h9M1873 1101.5h14M1434 675.5h3M1437 705.5h6M1443 744.5h4M1469 902.5h11M1520 990.5h8" stroke="#ff0000"/>
          ${labels.map(([t, x, y]) => svg`<text x=${x} y=${y + 4}>${t}</text>`)}
          <text class="gr" x="1434" y="89">51.11</text>
          ${UPS.map(([x, y]) => svg`<path d="M${x} ${y - 5}l5 5h-3v5h-4v-5h-3z" fill="#ff0000" stroke="#c8c8c8"/>`)}
          <path d="M1421 81l12 4M1421 81h5" stroke="#909090" fill="none"/>
          <text class="dim" x="1079" y="1309">用到未来数据</text>
          ${[1090, 1122, 1478, 1518, 1575, 1635, 1746, 1805, 1859, 1930, 1992, 2044].map((x) => svg`<path d="M${x - 3} 1316l3-4 3 4z" fill="#ff0000"/><text class="sm" x=${x} y="1325" text-anchor="middle">S</text>`)}
          ${[1222, 1277, 1334, 1403].map((x) => svg`<path d="M${x - 4} 1317l4-4 4 4z" fill="#c00000"/><path d="M${x - 4} 1322l4-4 4 4z" fill="#00a0ff"/>`)}
          ${([["跌", 1878, "#008000"], ["涨", 1961, "#800000"], ["增", 2030, "#800000"], ["财", 2053, "#003060"]] as [string, number, string][]).map(([t, x, c]) => svg`<rect x=${x} y="1310" width="13" height="13" fill=${c}/><text class="flag" x=${x} y="1321">${t}</text>`)}
          <path d="M1183.5 62V1324M1078 259.5H2063" stroke="#c8c8c8"/>
        </g>
        <path d="M2030 67l2-4h4l2 2 3-2h6l2 2 3-2h11v4h-9l-2-1-3 2h-9l-3-2-3 2z" fill="#ff00ff"/>
        <path d="M2063.5 62V1341M1078 1324.5H2114M1078 1340.5H2114" stroke="#c00000"/>
        ${XMARKS.map(([t, x], i) => svg`${i ? svg`<path d="M${x - 1}.5 1325v15" stroke="#c00000"/>` : nothing}
          <path d="M${x + 9}.5 1325v2M${x + 18}.5 1325v2" stroke="#c00000"/><text class="ax" x=${x + 1} y="1337">${t}</text>`)}
        <rect x="1184" y="1325" width="77" height="15" fill="#000080"/><text class="gr" x="1185" y="1337">2002/08/06/二</text>
        <text class="gr" x="2076" y="1337">日线</text>
        <rect x="2064" y="243" width="50" height="17" fill="#000080"/><path d="M2064 243.5h50M2064 259.5h50" stroke="#c00000"/><text class="gr" x="2065" y="256">43.50</text>
      </svg>`;
  }
}

/* ---------- right quote panel ---------- */

const TICKS_R = `14:53 3.83 604 B 1|14:53 3.83 9 B 3|14:53 3.83 41 B 4|14:53 3.82 28 S 6|14:53 3.83 67 B 5|14:53 3.83 13 B 4|14:54 3.83 7 B 2|14:54 3.83 239 B 10|14:54 3.83 232 B 7|14:54 3.83 3 B 3|14:54 3.83 406 B 11|14:54 3.83 1 B 1|14:54 3.82 1253 S 33|14:54 3.82 9 B 1|14:54 3.82 165 B 3|14:54 3.82 9 B 1|14:54 3.82 213 B 4|14:54 3.82 92 B 7|14:54 3.82 283 B 9|14:54 3.82 42 B 5|14:54 3.83 2030 B 21|14:54 3.82 4 S 1|14:54 3.81 184 S 4|14:54 3.82 93 B 5|14:55 3.82 30 S 1|14:55 3.83 60 B 2|14:55 3.82 25 S 2|14:55 3.81 1074 S 26|14:55 3.81 535 B 21|14:55 3.81 464 B 11|14:55 3.81 33 B 3|14:55 3.82 12 B 3|14:55 3.81 51 S 10|14:55 3.82 367 B 12|14:55 3.83 20 B 4|14:55 3.83 3 B 3|14:55 3.81 314 S 10|14:55 3.83 102 B 3|14:55 3.84 60 B 2|14:55 3.81 300 S 10|14:55 3.84 27 B 5|14:55 3.84 10 B 2|14:56 3.84 1010 B 4|14:56 3.84 681 B 9|14:56 3.85 24 B 3|14:56 3.82 61 S 3|14:56 3.85 3 B 1|14:56 3.85 61 B 2|15:00 3.86 1419 S 39`
  .split("|").map((r) => r.split(" "));

@customElement("right-quote")
class RightQuote extends LitElement {
  static styles = [base, css`
    :host { display: flex; flex-direction: column; width: 225px; flex: none; background: #000; border-left: 1px solid #c00000; color: #c0c0c0; font: bold 14px "Liberation Sans", "Noto Sans CJK SC", sans-serif; overflow: hidden; }
    h2 { display: flex; align-items: center; justify-content: center; height: 28px; margin: 0; padding-right: 20px; gap: 4px; border-bottom: 1px solid #c00000; color: #ffff00; font-size: 14px; }
    h2 .nm { font-size: 16px; font-weight: 400; }
    h2 .rr { color: #ff4040; font-size: 12px; padding-bottom: 8px; }
    section { border-bottom: 1px solid #c00000; padding: 0 4px 1px 2px; }
    .flow { padding-top: 1px; padding-bottom: 2px; }
    tr { height: 19px; line-height: 19px; }
    th { font-size: 16px; color: #c0c0c0; overflow: visible; }
    th.s { padding-left: 5px; }
    td { text-align: right; }
    .ticks { flex: 1; padding: 0 4px 0 3px; }
    .ticks tr { height: 18px; line-height: 18px; }
    .ticks td:first-child { text-align: left; }
    .ticks .n { font-weight: 400; color: #808080; }
    .ticks .k { text-align: center; font-weight: 400; }
    .tabs { display: flex; height: 14px; border-top: 1px solid #c00000; font: 13px "Noto Sans CJK SC", sans-serif; overflow: hidden; }
    .tabs button { flex: 1; border-right: 1px solid #c00000; line-height: 14px; height: 13px; }
    .tabs .on { color: #00ffff; }
    .r { color: #ff3030; } .g { color: #00e600; } .wh { color: #fff; } .m { color: #c000c0; } .w { color: #fff; } .gy { color: #c0c0c0; }
  `];

  private side(rows: string[][]) {
    return html`<section><table><colgroup><col style="width:34px"><col style="width:73px"><col></colgroup>
      ${rows.map(([l, p, v]) => html`<tr><th>${l}</th><td class=${tone(p)}>${p}</td><td class="y">${v}</td></tr>`)}
    </table></section>`;
  }

  private grid(rows: string[][]) {
    return html`<section><table><colgroup><col style="width:34px"><col style="width:73px"><col style="width:40px"><col></colgroup>
      ${rows.map(([a, av, ac, b, bv, bc]) => html`<tr><th>${a}</th><td class=${ac}>${av}</td><th class="s">${b}</th><td class=${bc}>${bv}</td></tr>`)}
    </table></section>`;
  }

  render() {
    return html`
      <h2><span class="rr">R</span><span>000718</span><span class="nm">苏宁环球</span></h2>
      ${this.grid([["委比", "-41.46%", "g", "委差", "-2976", "g"]])}
      ${this.side([["卖五", "3.90", "1351"], ["卖四", "3.89", "479"], ["卖三", "3.88", "1433"], ["卖二", "3.87", "929"], ["卖一", "3.86", "885"]])}
      ${this.side([["买一", "3.85", "634"], ["买二", "3.84", "18"], ["买三", "3.83", "249"], ["买四", "3.82", "178"], ["买五", "3.81", "1022"]])}
      ${this.grid([
        ["现价", "3.86", "r", "今开", "3.84", "wh"], ["涨跌", "0.02", "r", "最高", "3.94", "r"],
        ["涨幅", "0.52%", "r", "最低", "3.81", "g"], ["总量", "119830", "y", "量比", "1.09", "r"],
        ["外盘", "64454", "r", "内盘", "55376", "g"],
      ])}
      ${this.grid([
        ["换手", "0.52%", "gy", "股本", "30.3亿", "gy"], ["净资", "2.59", "gy", "流通", "22.9亿", "gy"],
        ["收益㈡", "0.205", "gy", "PE(动)", "9.4", "gy"],
      ])}
      <section class="flow"><table><colgroup><col style="width:70px"><col style="width:117px"><col></colgroup>
        <tr><th>净流入额</th><td class="r">346.0万</td><td class="r">7%</td></tr>
        <tr><th>大宗流入</th><td class="g">-301.8万</td><td class="g">-7%</td></tr>
      </table></section>
      <div class="ticks"><table>
        <colgroup><col style="width:44px"><col style="width:58px"><col style="width:63px"><col style="width:31px"><col></colgroup>
        ${TICKS_R.map(([t, p, v, k, n]) => html`<tr><td class="gy">${t}</td><td class=${tone(p)}>${p}</td>
          <td class=${+v >= 500 ? "m" : "y"}>${v}</td><td class="k ${k === "B" ? "r" : "g"}">${k}</td><td class="n">${n}</td></tr>`)}
      </table></div>
      <div class="tabs">${[..."笔价细势联值主筹"].map((t, i) => html`<button class=${i ? "" : "on"}>${t}</button>`)}</div>`;
  }
}

/* ---------- right window ---------- */

@customElement("right-window")
class RightWindow extends LitElement {
  static styles = [base, css`
    :host { display: flex; flex-direction: column; min-width: 0; background: #000; font: 12px "Liberation Sans", "Noto Sans CJK SC", sans-serif; color: #c0c0c0; }
    header { display: flex; align-items: center; height: 25px; background: linear-gradient(#fdfdfd, #cacaca); border-bottom: 1px solid #808080; color: #000; white-space: nowrap; }
    .logo { margin-right: 9px; }
    .mi { margin-right: 19px; }
    .mk { height: 24px; padding: 0 8px; background: #f4f4f4; border: solid #909090; border-width: 0 1px; color: #ff0000; }
    h1 { font: inherit; margin: 0 auto; }
    h1 span { margin-left: 12px; }
    .clock { height: 24px; line-height: 24px; padding: 0 2px; border: solid #a0a0a0; border-width: 0 1px; background: #f6f6f6; color: #333; margin-right: 6px; }
    .hb { width: 35px; height: 20px; margin-right: 2px; border: 1px solid #a0a0a0; background: linear-gradient(#f4f4f4, #c8c8c8); line-height: 18px; }
    .cb { width: 21px; height: 21px; margin: 0 0 0 1px; }
    .cb:last-child { margin-right: 5px; }
    .main { flex: 1; display: flex; min-height: 0; }
    .left { flex: 1; display: flex; flex-direction: column; min-width: 0; }
    .upper { flex: 1; display: flex; min-height: 0; }
    aside { width: 18px; flex: none; border-right: 1px solid #c00000; display: flex; flex-direction: column; }
    aside button { width: 17px; height: 60px; padding: 0 1px; line-height: 12px; white-space: normal; border-bottom: 1px solid #c00000; flex: none; }
    aside button.first { height: 58px; }
    aside button.three { height: 48px; }
    aside button.on { background: #b00000; color: #fff; }
    .col { flex: 1; display: flex; flex-direction: column; min-width: 0; }
    .period { display: flex; align-items: center; height: 22px; padding-left: 4px; border-bottom: 1px solid #c00000; gap: 10px; }
    .period .on { color: #00ffff; }
    .period .tool { width: 36px; height: 21px; border-left: 1px solid #c00000; }
    .tools { display: flex; margin-left: auto; }
    .tpl { display: flex; height: 17px; border-bottom: 1px solid #c00000; line-height: 15px; }
    .tpl button { border-right: 1px solid #c00000; flex: none; width: 30px; }
    .tpl .w44 { width: 44px; }
    .tpl .on { color: #00ffff; width: 32px; }
    .tpl .dark { background: #222; }
    .tpl .mono { font: 11px "Liberation Mono", "Noto Sans CJK SC", monospace; line-height: 15px; width: 50px; }
    .tpl .wide { width: 56px; }
    .zoom { margin-left: auto; display: flex; border-left: 1px solid #c00000; }
    .tpl .zoom button { width: 16px; }
    .tpl .zoom button:last-child { width: 18px; border-right: 0; }
    .foot { display: flex; height: 13px; overflow: hidden; line-height: 13px; }
    .foot button { padding: 0 3px; height: 13px; border-right: 1px solid #c00000; }
  `];

  render() {
    const side = ["分时走势", "技术分析", "成交明细", "分价表", "基本资料", "图文F 10"];
    const cls = (i: number) => classMap({ first: i === 0, on: i === 1, three: i === 3 });
    return html`
      <header>
        <svg class="logo" width="18" height="22" viewBox="0 0 18 22"><path fill="#d01818" d="M1 3h16v16H1z"/><path fill="#fff" d="M2 8l5 2 1-5 3 5 6-4-5 7-2 5-3-3-5-1 3-2z"/></svg>
        ${["系统", "功能", "报价", "分析", "扩展市场行情", "资讯", "工具", "帮助"].map((t) => html`<button class="mi">${t}</button>`)}
        <button class="mk">市场</button>
        <h1>通达信金融终端<span>苏宁环球</span></h1>
        <time class="clock">17:27:04 周三</time>
        ${["行情", "资讯", "交易", "服务"].map((t) => html`<button class="hb">${t}</button>`)}
        ${["M6 14h9", "M6 7h9v7H6z", "M6 6l9 9M15 6l-9 9"].map((d, i) => html`<button class="cb" aria-label=${["最小化", "最大化", "关闭"][i]}><svg width="21" height="21"><circle cx="10" cy="10" r="9" fill="#e4e4e4" stroke="#808080" stroke-width="2"/><path d=${d} fill="none" stroke="#666" stroke-width="2"/></svg></button>`)}
      </header>
      <div class="main">
        <div class="left">
          <div class="upper">
            <aside>${side.map((t, i) => html`<button class=${cls(i)}>${t}</button>`)}</aside>
            <div class="col">
              <div class="period">
                ${["分时", "1分钟", "5分钟", "15分钟", "30分钟", "60分钟", "日线", "周线", "月线", "更多 〉"].map((t) => html`<button class=${t === "日线" ? "on" : ""}>${t}</button>`)}
                <div class="tools">${["复权", "叠加", "画线", "F10", "标记", "+自选", "返回"].map((t) => html`<button class="tool">${t}</button>`)}</div>
              </div>
              <right-chart></right-chart>
              <div class="tpl">
                <button>指标</button><button class="dark">模板</button><button class="on">管理</button><button class="w44">另存为</button><button class="w44">绑定到</button>
                <button class="mono wide">MACD基本</button><button class="mono">DDE决策</button><button class="mono">SUP决策</button><button class="wide">资金决策</button>
                <div class="zoom"><button>+</button><button>−</button><button>0</button></div>
              </div>
            </div>
          </div>
          <div class="foot"><button>开弹幕</button><button>扩展∧</button><button>关联报价</button></div>
        </div>
        <right-quote></right-quote>
      </div>`;
  }
}

/* ---------- floating desktop widgets and root ---------- */

@customElement("app-root")
export class AppRoot extends LitElement {
  static styles = [base, css`
    :host { display: grid; position: relative; grid-template-columns: minmax(0, 1060fr) minmax(0, 1279fr); height: 100vh; overflow: hidden; font: 13px "Liberation Sans", "Noto Sans CJK SC", sans-serif; }
    .state { position: absolute; right: 13px; bottom: 224px; width: 200px; height: 38px; padding: 4px; background: #000; border: 2px solid; border-color: #f0f0f0 #606060 #606060 #f0f0f0; }
    .state div { display: flex; align-items: center; height: 27px; padding-left: 3px; background: #bfcddb; border: 2px solid #f0f0f0; font-weight: 500; color: #000; }
    .state button { margin-left: 10px; }
    .state button:first-of-type { margin-left: auto; }
    .state button:last-of-type { margin-right: 4px; }
    .ime { position: absolute; right: 0; bottom: 83px; width: 205px; height: 23px; background: #fff; display: flex; align-items: center; color: #1b6fc0; }
    .net { position: absolute; right: 18px; bottom: -1px; }
    text { font: 12px "Liberation Sans", sans-serif; fill: #e8e8e8; }
    .k { fill: #888; }
    .pct { font: 25px "Open Sans", "Liberation Sans", sans-serif; font-weight: 300; }
    .zh { font: bold 16px "Noto Sans CJK SC", sans-serif; fill: #1b6fc0; }
  `];

  render() {
    return html`
      <left-window></left-window>
      <right-window></right-window>
      <div class="state"><div>交易状态
        <button aria-label="固定"><svg width="10" height="10"><path d="M0 5h4M4 1v8M4 3h5v4H4" fill="none" stroke="#000" stroke-width="1.5"/></svg></button>
        <button aria-label="关闭"><svg width="9" height="9"><path d="M1 1l7 7M8 1L1 8" stroke="#000" stroke-width="2"/></svg></button>
      </div></div>
      <div class="ime">
        <svg width="205" height="28" viewBox="0 0 205 28" overflow="visible">
          <path d="M-5 5L17-1q3 0 4 3l6 18q0 3-3 4L3 27q-3 0-4-3L-7 8q0-2 2-3z" fill="#f05a1e"/>
          <path d="M18 6Q2 5 3 10t10 3q8 1 7 5t-17 3" fill="none" stroke="#fff" stroke-width="4"/>
          <text class="zh" x="32" y="20">中</text>
          <circle cx="58" cy="11" r="2" fill="none" stroke="#1b6fc0"/><path d="M64 15h4v3l-3 3z" fill="#1b6fc0"/>
          <circle cx="84" cy="14" r="7" fill="none" stroke="#1b6fc0" stroke-width="2"/><path d="M81 11v2M87 11v2M80 15q4 5 8 0" fill="none" stroke="#1b6fc0" stroke-width="1.5"/>
          <rect x="103" y="6" width="6" height="10" rx="3" fill="#1b6fc0"/><path d="M100 12q0 7 6 7t6-7M106 19v3M102 22h8" fill="none" stroke="#1b6fc0" stroke-width="1.5"/>
          <rect x="120" y="9" width="16" height="11" rx="1" fill="#1b6fc0"/><path d="M122 12h12M122 15h12" stroke="#fff" stroke-dasharray="2 1"/><path d="M124 18h8" stroke="#fff"/>
          <circle cx="150" cy="9" r="3" fill="#b0bccf"/><path d="M144 20q0-7 6-7 4 0 5 3v4z" fill="#b0bccf"/><rect x="151" y="15" width="6" height="6" fill="#fff" stroke="#b0bccf"/>
          <path d="M165 10l5-3q2 2 4 0l5 3-2 4-2-1v8h-6v-8l-2 1z" fill="#1b6fc0"/>
          <path d="M188 8h6v6h-6zM188 15h6v6h-6zM195 15h6v6h-6z" fill="#1b6fc0"/><path d="M196 9h5v4h-5z" fill="none" stroke="#1b6fc0"/>
        </svg>
      </div>
      <svg class="net" width="117" height="58" viewBox="0 0 117 58">
        <rect x="1" y="11" width="90" height="41" rx="18" fill="#20252f" fill-opacity=".92"/>
        <path d="M4 31h58" stroke="#353b46"/>
        <path d="M14 24v-7M11 20l3-3 3 3" fill="none" stroke="#30a0e8" stroke-width="2"/>
        <path d="M14 38v7M11 42l3 3 3-3" fill="none" stroke="#20a020" stroke-width="2"/>
        <text x="23" y="25">0.5<tspan class="k">K/s</tspan></text>
        <text x="23" y="46">0.2<tspan class="k">K/s</tspan></text>
        <circle cx="88" cy="29" r="28" fill="#2c303c" fill-opacity=".95"/>
        <path d="M88 4A25 25 0 0 1 112 38" fill="none" stroke="#30d0c0" stroke-width="2"/>
        <path d="M112 38A25 25 0 0 1 90 54" fill="none" stroke="#b0e060" stroke-width="2"/>
        <text class="pct" x="71" y="38">49</text><text x="99" y="38">%</text>
      </svg>`;
  }
}
